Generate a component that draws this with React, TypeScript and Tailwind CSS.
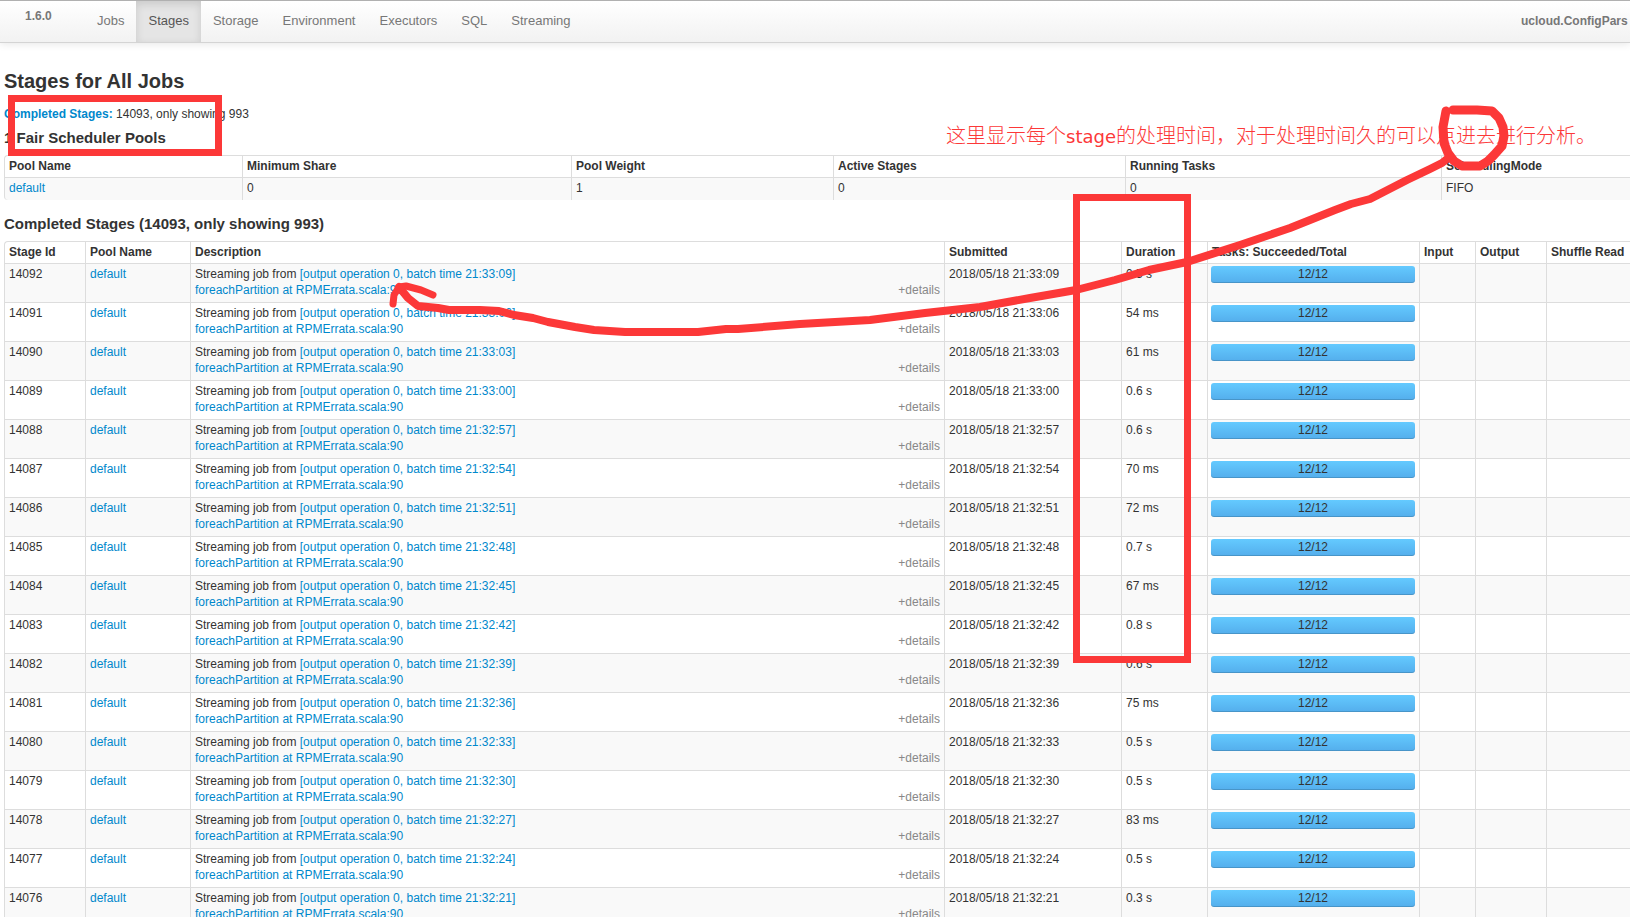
interface Stage {
  id: number;
  time: string;
  duration: string;
}

const tabs = ["Jobs", "Stages", "Storage", "Environment", "Executors", "SQL", "Streaming"];

const poolHeaders = [
  "Pool Name",
  "Minimum Share",
  "Pool Weight",
  "Active Stages",
  "Running Tasks",
  "SchedulingMode",
];

const stageHeaders = [
  "Stage Id",
  "Pool Name",
  "Description",
  "Submitted",
  "Duration",
  "Tasks: Succeeded/Total",
  "Input",
  "Output",
  "Shuffle Read",
];

const stages: Stage[] = [
  { id: 14092, time: "21:33:09", duration: "0.5 s" },
  { id: 14091, time: "21:33:06", duration: "54 ms" },
  { id: 14090, time: "21:33:03", duration: "61 ms" },
  { id: 14089, time: "21:33:00", duration: "0.6 s" },
  { id: 14088, time: "21:32:57", duration: "0.6 s" },
  { id: 14087, time: "21:32:54", duration: "70 ms" },
  { id: 14086, time: "21:32:51", duration: "72 ms" },
  { id: 14085, time: "21:32:48", duration: "0.7 s" },
  { id: 14084, time: "21:32:45", duration: "67 ms" },
  { id: 14083, time: "21:32:42", duration: "0.8 s" },
  { id: 14082, time: "21:32:39", duration: "0.6 s" },
  { id: 14081, time: "21:32:36", duration: "75 ms" },
  { id: 14080, time: "21:32:33", duration: "0.5 s" },
  { id: 14079, time: "21:32:30", duration: "0.5 s" },
  { id: 14078, time: "21:32:27", duration: "83 ms" },
  { id: 14077, time: "21:32:24", duration: "0.5 s" },
  { id: 14076, time: "21:32:21", duration: "0.3 s" },
];

const cell = "border-t border-l border-[#dddddd] px-1 pt-[2px] align-top";
const link = "text-[#0088cc] hover:underline";

const Navbar = () => {
  return (
    <nav className="flex h-[43px] border-t border-b border-t-[#b0b0b0] border-b-[#d4d4d4] bg-linear-to-b from-white to-[#f2f2f2] text-[13px] leading-5 text-[#777777] shadow-[0_1px_8px_rgba(0,0,0,0.1)]">
      <span className="w-[85px] pt-[5px] pl-[25px] text-xs leading-5 font-bold">1.6.0</span>
      <ul className="flex">
        {tabs.map((tab) => (
          <li key={tab} className="flex">
            <a
              href="#"
              className={
                tab === "Stages"
                  ? "bg-[#e5e5e5] px-3 pt-[10px] text-[#555555] shadow-[inset_0_3px_8px_rgba(0,0,0,0.125)]"
                  : "px-3 pt-[10px] hover:text-[#333333]"
              }
            >
              {tab}
            </a>
          </li>
        ))}
      </ul>
      <strong className="ml-auto w-[109px] overflow-hidden pt-[10px] text-xs leading-5 whitespace-nowrap">
        ucloud.ConfigPars
      </strong>
    </nav>
  );
};

const PoolTable = () => {
  return (
    <table className="w-full table-fixed border-separate border-spacing-0 text-left">
      <colgroup>
        <col className="w-[238px]" />
        <col className="w-[329px]" />
        <col className="w-[262px]" />
        <col className="w-[292px]" />
        <col className="w-[316px]" />
        <col />
      </colgroup>
      <thead>
        <tr className="h-[22px]">
          {poolHeaders.map((header) => (
            <th key={header} className={`${cell} first:rounded-tl`}>
              {header}
            </th>
          ))}
        </tr>
      </thead>
      <tbody>
        <tr className="h-[23px] bg-[#f9f9f9]">
          <td className={`${cell} first:rounded-bl`}>
            <a href="#" className={link}>
              default
            </a>
          </td>
          <td className={cell}>0</td>
          <td className={cell}>1</td>
          <td className={cell}>0</td>
          <td className={cell}>0</td>
          <td className={cell}>FIFO</td>
        </tr>
      </tbody>
    </table>
  );
};

const StageRow = ({ stage }: { stage: Stage }) => {
  return (
    <tr className="h-[39px] odd:bg-[#f9f9f9]">
      <td className={cell}>{stage.id}</td>
      <td className={cell}>
        <a href="#" className={link}>
          default
        </a>
      </td>
      <td className={cell}>
        <div>
          Streaming job from{" "}
          <a href="#" className={link}>
            [output operation 0, batch time {stage.time}]
          </a>
        </div>
        <div className="flex justify-between">
          <a href="#" className={link}>
            foreachPartition at RPMErrata.scala:90
          </a>
          <button type="button" className="cursor-pointer text-[#888888]">
            +details
          </button>
        </div>
      </td>
      <td className={cell}>2018/05/18 {stage.time}</td>
      <td className={cell}>{stage.duration}</td>
      <td className="border-t border-l border-[#dddddd] pt-[2px] pr-1 pl-[3px] align-top">
        <div className="h-[17px] rounded-[3px] bg-linear-to-b from-[#64caff] to-[#54aeec] text-center leading-4 shadow-[inset_0_-1px_0_rgba(0,0,0,0.15)]">
          12/12
        </div>
      </td>
      <td className={cell} />
      <td className={cell} />
      <td className={cell} />
    </tr>
  );
};

const StageTable = () => {
  return (
    <table className="w-full table-fixed border-separate border-spacing-0 text-left">
      <colgroup>
        <col className="w-[81px]" />
        <col className="w-[105px]" />
        <col />
        <col className="w-[177px]" />
        <col className="w-[86px]" />
        <col className="w-[212px]" />
        <col className="w-[56px]" />
        <col className="w-[71px]" />
        <col className="w-[84px]" />
      </colgroup>
      <thead>
        <tr className="h-[22px]">
          {stageHeaders.map((header) => (
            <th key={header} className={`${cell} whitespace-nowrap first:rounded-tl`}>
              {header}
            </th>
          ))}
        </tr>
      </thead>
      <tbody>
        {stages.map((stage) => (
          <StageRow key={stage.id} stage={stage} />
        ))}
      </tbody>
    </table>
  );
};

// red marker notes drawn over the page
const Annotations = () => {
  return (
    <div className="pointer-events-none absolute inset-0 overflow-hidden text-[#fc3838]">
      <p className="absolute top-[120px] left-[946px] font-['Noto_Sans_CJK_SC',sans-serif] text-xl leading-[30px] font-light whitespace-nowrap">
        这里显示每个
        <span className="font-['DejaVu_Sans',sans-serif] text-lg font-normal">stage</span>
        的处理时间，对于处理时间久的可以点进去进行分析。
      </p>
      <div className="absolute top-[95px] left-[8px] h-[61px] w-[214px] border-[7px] border-current" />
      <div className="absolute top-[194px] left-[1073px] h-[469px] w-[118px] border-[7px] border-current" />
      <svg
        width="1630"
        height="917"
        viewBox="0 0 1630 917"
        fill="none"
        stroke="currentColor"
        strokeLinecap="round"
        strokeLinejoin="round"
        className="absolute top-0 left-0 max-w-none"
      >
        <path
          strokeWidth="9"
          d="M1446 111L1443 127L1444 143L1448 153L1454 161L1462 166L1480 166L1488 161L1494 155L1502 146L1504 136L1503 127L1499 118L1492 111L1477 110L1453 110"
        />
        <path
          strokeWidth="8"
          d="M1447 159L1442 163L1430 169L1407 180L1370 199L1351 204L1335 210L1290 228L1240 245L1187 262L1149 270L1115 280L1076 290L1030 298L980 307L925 313L870 320L800 324L738 329L726 329L698 332L625 332L594 330L575 327L548 322L533 318L514 315L499 311L480 310L449 310L438 308L418 306L408 298L399 287"
        />
        <path strokeWidth="7" d="M393 304L394 295L399 287L406 286L421 290L433 295" />
      </svg>
    </div>
  );
};

const App = () => {
  return (
    <div className="relative min-h-screen overflow-x-hidden bg-white font-['Liberation_Sans',Arial,sans-serif] text-xs leading-4 text-[#333333]">
      <Navbar />
      <main className="pl-1">
        <h3 className="pt-[24px] text-xl leading-[28px] font-bold">Stages for All Jobs</h3>
        <p className="mt-[11px]">
          <a href="#" className={`${link} font-bold`}>
            Completed Stages:
          </a>{" "}
          14093, only showing 993
        </p>
        <h4 className="mt-[6px] mb-[7px] text-[15px] leading-5 font-bold">1 Fair Scheduler Pools</h4>
        <PoolTable />
        <h4 className="mt-[14px] mb-[7px] text-[15px] leading-5 font-bold">
          Completed Stages (14093, only showing 993)
        </h4>
        <StageTable />
      </main>
      <Annotations />
    </div>
  );
};

export default App;
